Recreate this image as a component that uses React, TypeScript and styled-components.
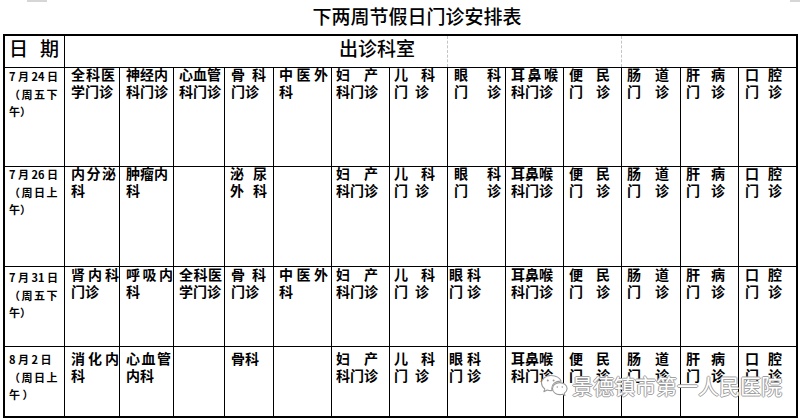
import React from "react";
import styled, { createGlobalStyle } from "styled-components";

const Global = createGlobalStyle`
  html, body { margin: 0; padding: 0; background: #fff; }
  body { font-family: "Noto Sans CJK SC", "Noto Sans", sans-serif; color: #000; }
`;

const Page = styled.div`
  position: relative;
  width: 800px;
  height: 420px;
  overflow: hidden;
  background: #fff;
`;

const TopStrip = styled.div`
  display: flex;
  height: 2px;
`;

const StripMark = styled.span<{ $left: string; $w: number }>`
  margin-left: ${(p) => p.$left};
  width: ${(p) => p.$w}px;
  background: #d6d6d6;
`;

const Title = styled.h1`
  margin: 0;
  height: 32px;
  line-height: 28px;
  font-size: 19px;
  font-weight: 500;
  text-align: center;
  padding-left: 34px;
  box-sizing: border-box;
`;

const Table = styled.div`
  display: grid;
  grid-template-columns: 59px 54px 53px 50px 48px repeat(6, 57px) 58px 57px 57px;
  grid-template-rows: 31px 98px 99px 79px 69px;
  gap: 1px;
  padding: 2px;
  background: #000;
  margin-left: 3px;
  width: max-content;
`;

const HeadCell = styled.div`
  background: #fff;
  display: flex;
  align-items: flex-start;
  gap: 12px;
  padding-left: 4px;
  font-size: 19px;
  font-weight: 500;
  line-height: 24px;
  white-space: nowrap;
`;

const HeadSpan = styled.div`
  grid-column: 2 / span 13;
  display: flex;
  background: #fff;
`;

const HeadSegment = styled.div<{ $w: number; $dashed?: boolean; $pl?: number }>`
  width: ${(p) => p.$w}px;
  box-sizing: border-box;
  border-left: ${(p) => (p.$dashed ? "1px dashed #c4c4c4" : "none")};
  padding-left: ${(p) => p.$pl ?? 0}px;
  font-size: 19px;
  font-weight: 500;
  line-height: 24px;
`;

const DateCell = styled.div`
  background: #fff;
  padding-left: 4px;
  font-size: 11px;
  font-weight: 700;
  line-height: 17.5px;
  white-space: pre;
`;

const DateLines = styled.div<{ $mt: number }>`
  margin-top: ${(p) => p.$mt}px;
`;

const DateLine = styled.div<{ $ls?: number }>`
  letter-spacing: ${(p) => p.$ls ?? 0}px;
`;

const Cell = styled.div<{ $pl: number }>`
  background: #fff;
  padding-left: ${(p) => p.$pl}px;
  font-size: 14px;
  font-weight: 700;
  line-height: 17px;
`;

const Lines = styled.div<{ $mt: number }>`
  margin-top: ${(p) => p.$mt}px;
`;

const Line = styled.div<{ $gap: number }>`
  display: flex;
  gap: ${(p) => p.$gap}px;
`;

const Watermark = styled.div`
  position: absolute;
  left: 539px;
  top: 370px;
  display: flex;
  align-items: center;
  gap: 3px;
`;

const WatermarkText = styled.span`
  font-size: 21px;
  font-weight: 400;
  color: #fff;
  text-shadow: 1px 0 0 #a0a0a0, -1px 0 0 #a0a0a0, 0 1px 0 #a0a0a0, 0 -1px 0 #a0a0a0;
`;

type L = { t: string; g?: number };
type C = { lines: L[]; pl?: number } | null;

const colPad = [6, 6, 5, 6, 5, 4, 4, 6, 5, 5, 5, 5, 6];

const std = (row: "a" | "b" | "c" | "d"): C[] => {
  const eyeWide = row === "a" || row === "b";
  return [
    { lines: [{ t: "妇产", g: 14 }, { t: "科门诊" }] },
    { lines: [{ t: "儿科", g: 13 }, { t: "门诊", g: 7 }] },
    eyeWide
      ? { lines: [{ t: "眼科", g: 19 }, { t: "门诊", g: 19 }] }
      : { lines: [{ t: "眼科", g: 4 }, { t: "门诊", g: 4 }], pl: 1 },
    row === "a"
      ? { lines: [{ t: "耳鼻喉", g: 2.5 }, { t: "科门诊" }] }
      : { lines: [{ t: "耳鼻喉", g: -0.5 }, { t: "科门诊", g: -0.5 }] },
    { lines: [{ t: "便民", g: 13 }, { t: "门诊", g: 13 }] },
    { lines: [{ t: "肠道", g: 14 }, { t: "门诊", g: 14 }] },
    { lines: [{ t: "肝病", g: 11 }, { t: "门诊", g: 11 }] },
    { lines: [{ t: "口腔", g: 9 }, { t: "门诊", g: 9 }] },
  ];
};

const rows: {
  date: { t: string; ls?: number }[];
  dmt: number;
  mt: number;
  cells: C[];
}[] = [
  {
    date: [{ t: "7 月 24 日" }, { t: "（周五下", ls: 1.5 }, { t: "午）" }],
    dmt: 0,
    mt: -2,
    cells: [
      { lines: [{ t: "全科医", g: 1 }, { t: "学门诊" }] },
      { lines: [{ t: "神经内", g: 0 }, { t: "科门诊" }] },
      { lines: [{ t: "心血管", g: -0.5 }, { t: "科门诊", g: -0.5 }] },
      { lines: [{ t: "骨科", g: 7 }, { t: "门诊" }] },
      { lines: [{ t: "中医外", g: 3.5 }, { t: "科" }] },
      ...std("a"),
    ],
  },
  {
    date: [{ t: "7 月 26 日" }, { t: "（周日上", ls: 1.5 }, { t: "午）" }],
    dmt: -1,
    mt: -2,
    cells: [
      { lines: [{ t: "内分泌", g: 1.5 }, { t: "科" }] },
      { lines: [{ t: "肿瘤内", g: 0 }, { t: "科" }] },
      null,
      { lines: [{ t: "泌尿", g: 9 }, { t: "外科", g: 9 }], pl: 5 },
      null,
      ...std("b"),
    ],
  },
  {
    date: [{ t: "7 月 31 日" }, { t: "（周五下", ls: 1.5 }, { t: "午）" }],
    dmt: 2,
    mt: -1,
    cells: [
      { lines: [{ t: "肾内科", g: 3 }, { t: "门诊" }] },
      { lines: [{ t: "呼吸内", g: 2.5 }, { t: "科" }] },
      { lines: [{ t: "全科医", g: 0.5 }, { t: "学门诊" }] },
      { lines: [{ t: "骨科", g: 7 }, { t: "门诊" }] },
      { lines: [{ t: "中医外", g: 3.5 }, { t: "科" }] },
      ...std("c"),
    ],
  },
  {
    date: [{ t: "8 月 2 日" }, { t: "（周日上", ls: 1.5 }, { t: "午 ）" }],
    dmt: 4,
    mt: 3,
    cells: [
      { lines: [{ t: "消化内", g: 3 }, { t: "科" }] },
      { lines: [{ t: "心血管", g: 1.5 }, { t: "内科" }] },
      null,
      { lines: [{ t: "骨科" }] },
      null,
      ...std("d"),
    ],
  },
];

const WeChatIcon = () => (
  <svg width="30" height="24" viewBox="0 0 30 24" fill="none">
    <path
      d="M12 2.5c-5.5 0-9.5 3.4-9.5 7.6 0 2.4 1.3 4.4 3.3 5.8l-.9 2.8 3.3-1.7c1.2.4 2.4.6 3.8.6.4 0 .8 0 1.2-.1-.3-.8-.4-1.5-.4-2.3 0-4 3.7-7.1 8.4-7.1h.9C21.3 5 17.1 2.5 12 2.5z"
      fill="#fff"
      stroke="#9a9a9a"
      strokeWidth="1.1"
      strokeLinejoin="round"
    />
    <path
      d="M20.8 9.6c-4.1 0-7.3 2.7-7.3 6 0 3.3 3.2 6 7.3 6 .9 0 1.8-.1 2.6-.4l2.6 1.4-.7-2.3c1.7-1.1 2.8-2.8 2.8-4.7 0-3.3-3.2-6-7.3-6z"
      fill="#fff"
      stroke="#9a9a9a"
      strokeWidth="1.1"
      strokeLinejoin="round"
    />
    <circle cx="8.8" cy="7.6" r="1" fill="#9a9a9a" />
    <circle cx="14.6" cy="7.6" r="1" fill="#9a9a9a" />
    <circle cx="18.3" cy="14" r="0.8" fill="#9a9a9a" />
    <circle cx="23.3" cy="14" r="0.8" fill="#9a9a9a" />
  </svg>
);

export default function App() {
  return (
    <Page>
      <Global />
      <TopStrip>
        <StripMark $left="27px" $w={20} />
        <StripMark $left="auto" $w={10} />
      </TopStrip>
      <Title>下两周节假日门诊安排表</Title>
      <Table>
        <HeadCell>
          <span>日</span>
          <span>期</span>
        </HeadCell>
        <HeadSpan>
          <HeadSegment $w={382} $pl={274}>
            出诊科室
          </HeadSegment>
          <HeadSegment $w={174} $dashed />
          <HeadSegment $w={175} $dashed />
        </HeadSpan>
        {rows.map((r, ri) => (
          <React.Fragment key={ri}>
            <DateCell>
              <DateLines $mt={r.dmt}>
                {r.date.map((d, di) => (
                  <DateLine key={di} $ls={d.ls}>
                    {d.t}
                  </DateLine>
                ))}
              </DateLines>
            </DateCell>
            {r.cells.map((c, ci) => (
              <Cell key={ci} $pl={c?.pl ?? colPad[ci]}>
                {c && (
                  <Lines $mt={r.mt}>
                    {c.lines.map((l, li) => (
                      <Line key={li} $gap={l.g ?? 0}>
                        {Array.from(l.t).map((ch, k) => (
                          <span key={k}>{ch}</span>
                        ))}
                      </Line>
                    ))}
                  </Lines>
                )}
              </Cell>
            ))}
          </React.Fragment>
        ))}
      </Table>
      <Watermark>
        <WeChatIcon />
        <WatermarkText>景德镇市第一人民医院</WatermarkText>
      </Watermark>
    </Page>
  );
}
